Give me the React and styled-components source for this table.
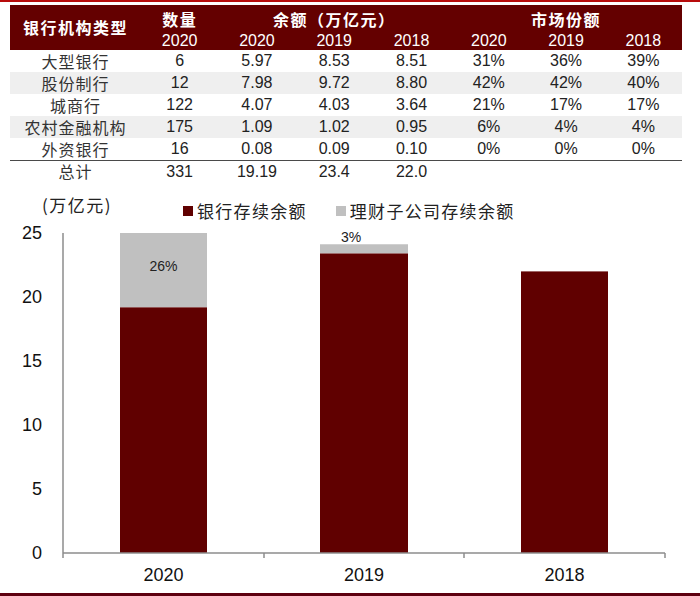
import React from 'react';
import styled, { createGlobalStyle } from 'styled-components';

const GlobalStyle = createGlobalStyle`
    html, body {
        margin: 0;
        padding: 0;
        background: #fff;
    }
`;

const maroon = '#640000';
const numFont = `"Liberation Sans", Arial, sans-serif`;
const cjkFont = `"Noto Sans CJK SC", "Liberation Sans", sans-serif`;

const Page = styled.div`
    width: 700px;
    height: 596px;
    box-sizing: border-box;
    border-top: 2px solid #b80c0c;
    border-bottom: 3px solid #5e0010;
    overflow: hidden;
    background: #fff;
`;

const Table = styled.div`
    margin: 3px 18px 0 10px;
`;

const cols = `131px repeat(7, 1fr)`;

const Head = styled.div`
    display: grid;
    grid-template-columns: ${cols};
    grid-template-rows: 27px 17px;
    padding-bottom: 1px;
    background: ${maroon};
    color: #fff;
`;

const HeadCell = styled.div`
    display: flex;
    align-items: center;
    justify-content: center;
    grid-column: ${(p) => p.$col || 'auto'};
    grid-row: ${(p) => p.$row || 'auto'};
    font-family: ${(p) => (p.$cjk ? cjkFont : numFont)};
    font-weight: ${(p) => (p.$cjk ? 700 : 400)};
    font-size: 16px;
    letter-spacing: ${(p) => (p.$cjk ? '1.5px' : '0')};
`;

const Row = styled.div`
    display: grid;
    grid-template-columns: ${cols};
    height: ${(p) => (p.$total ? '21px' : '22px')};
    line-height: ${(p) => (p.$total ? '21px' : '22px')};
    background: ${(p) => (p.$shade ? '#efefef' : '#fff')};
    border-top: ${(p) => (p.$total ? '1px solid #4a4a4a' : 'none')};
    color: #222;
`;

const Name = styled.div`
    text-align: center;
    font-family: ${cjkFont};
    font-size: 16px;
    letter-spacing: 1px;
    color: #333;
`;

const Num = styled.div`
    text-align: center;
    font-family: ${numFont};
    font-size: 16px;
`;

const ChartHead = styled.div`
    display: flex;
    align-items: flex-start;
    height: 40px;
`;

const Unit = styled.div`
    flex: 0 0 141px;
    margin: 13px 0 0 42px;
    line-height: 20px;
    font-family: ${cjkFont};
    font-size: 17px;
    letter-spacing: 1.5px;
    color: #222;
`;

const Legend = styled.div`
    display: flex;
    align-items: center;
    gap: 29px;
    margin-top: 19px;
`;

const LegendItem = styled.div`
    display: flex;
    align-items: center;
    gap: 4px;
    line-height: 20px;
    font-family: ${cjkFont};
    font-size: 17px;
    letter-spacing: 1.3px;
    color: #222;
`;

const Swatch = styled.span`
    width: 10px;
    height: 10px;
    background: ${(p) => p.$color};
`;

const Plot = styled.svg`
    display: block;
    width: 700px;
    height: 371px;
`;

const rows = [
    ['大型银行', '6', '5.97', '8.53', '8.51', '31%', '36%', '39%'],
    ['股份制行', '12', '7.98', '9.72', '8.80', '42%', '42%', '40%'],
    ['城商行', '122', '4.07', '4.03', '3.64', '21%', '17%', '17%'],
    ['农村金融机构', '175', '1.09', '1.02', '0.95', '6%', '4%', '4%'],
    ['外资银行', '16', '0.08', '0.09', '0.10', '0%', '0%', '0%'],
];

const total = ['总计', '331', '19.19', '23.4', '22.0', '', '', ''];

const bars = [
    { year: '2020', x: 120, w: 87, bank: 19.19, sub: 5.81, label: '26%', labelX: 163.5, labelY: 266 },
    { year: '2019', x: 320, w: 88, bank: 23.4, sub: 0.72, label: '3%', labelX: 351, labelY: 237 },
    { year: '2018', x: 521, w: 87, bank: 22.0, sub: 0 },
];

const base = 553;
const unit = 12.8;
const top = base - 25 * unit;

const Chart = () => (
    <Plot viewBox="0 222 700 371">
        <g fontFamily={numFont} fontSize="18" fill="#111">
            {[0, 5, 10, 15, 20, 25].map((v) => (
                <text key={v} x="42" y={base - v * unit + 6} textAnchor="end">
                    {v}
                </text>
            ))}
        </g>
        {bars.map((b) => {
            const bankTop = base - b.bank * unit;
            const subTop = Math.max(top, bankTop - b.sub * unit);
            return (
                <g key={b.year}>
                    {b.sub > 0 && (
                        <rect x={b.x} y={subTop} width={b.w} height={bankTop - subTop} fill="#c0c0c0" />
                    )}
                    <rect x={b.x} y={bankTop} width={b.w} height={base - bankTop} fill="#600000" />
                    {b.label && (
                        <text
                            x={b.labelX}
                            y={b.labelY + 5}
                            textAnchor="middle"
                            fontFamily={numFont}
                            fontSize="14"
                            fill="#222"
                        >
                            {b.label}
                        </text>
                    )}
                    <text
                        x={b.x + b.w / 2}
                        y="581"
                        textAnchor="middle"
                        fontFamily={numFont}
                        fontSize="18"
                        fill="#111"
                    >
                        {b.year}
                    </text>
                </g>
            );
        })}
        <g stroke="#8c8c8c" strokeWidth="1.5">
            <line x1="63" y1={top} x2="63" y2={base} />
            <line x1="63" y1={base} x2="665" y2={base} />
            {[63, 264, 464, 665].map((x) => (
                <line key={x} x1={x} y1={base} x2={x} y2={base + 5} />
            ))}
        </g>
    </Plot>
);

const App = () => (
    <Page>
        <GlobalStyle />
        <Table>
            <Head>
                <HeadCell $cjk $col="1" $row="1 / span 2">银行机构类型</HeadCell>
                <HeadCell $cjk $col="2" $row="1">数量</HeadCell>
                <HeadCell $cjk $col="3 / span 3" $row="1">余额（万亿元）</HeadCell>
                <HeadCell $cjk $col="6 / span 3" $row="1">市场份额</HeadCell>
                {['2020', '2020', '2019', '2018', '2020', '2019', '2018'].map((y, i) => (
                    <HeadCell key={i} $col={String(i + 2)} $row="2">
                        {y}
                    </HeadCell>
                ))}
            </Head>
            {rows.map((r, i) => (
                <Row key={r[0]} $shade={i % 2 === 1}>
                    <Name>{r[0]}</Name>
                    {r.slice(1).map((v, j) => (
                        <Num key={j}>{v}</Num>
                    ))}
                </Row>
            ))}
            <Row $total>
                <Name>{total[0]}</Name>
                {total.slice(1).map((v, j) => (
                    <Num key={j}>{v}</Num>
                ))}
            </Row>
        </Table>
        <ChartHead>
            <Unit>(万亿元)</Unit>
            <Legend>
                <LegendItem>
                    <Swatch $color="#600000" />
                    银行存续余额
                </LegendItem>
                <LegendItem>
                    <Swatch $color="#c0c0c0" />
                    理财子公司存续余额
                </LegendItem>
            </Legend>
        </ChartHead>
        <Chart />
    </Page>
);

export default App;
